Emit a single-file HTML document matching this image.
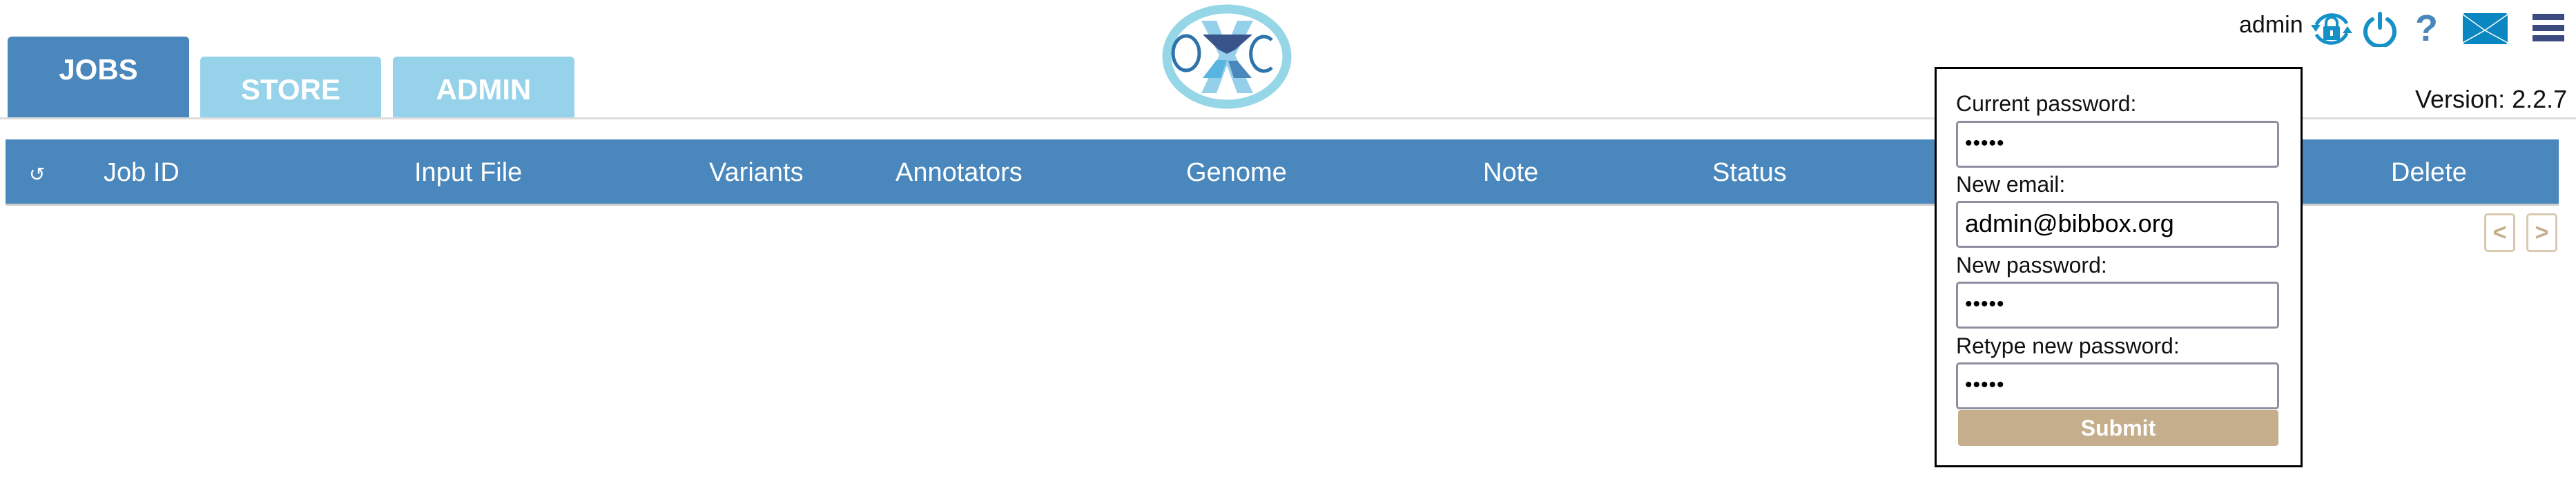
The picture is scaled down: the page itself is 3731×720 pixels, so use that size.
<!DOCTYPE html>
<html><head><meta charset="utf-8"><style>
*{margin:0;padding:0;box-sizing:border-box}
body{width:3731px;height:720px;background:#fff;position:relative;overflow:hidden;font-family:"Liberation Sans Narrow","Liberation Sans",sans-serif}
.a{position:absolute}
.tab{position:absolute;color:#fff;font-size:42px;font-weight:bold;text-align:center;border-radius:6px 6px 0 0}
.th{position:absolute;top:229px;color:#fff;font-size:38px;white-space:nowrap}
.lbl{position:absolute;left:2833px;font-size:32px;color:#111;white-space:nowrap}
.inp{position:absolute;left:2833px;width:468px;height:68px;border:3px solid #8e8ea0;border-radius:5px;font-size:36px;padding-left:10px;line-height:60px;color:#000;font-family:"Liberation Sans",sans-serif}
.dots{font-size:30px;letter-spacing:1px}
.pg{position:absolute;top:309px;width:45px;height:56px;border:3px solid #d9c9b0;border-radius:5px;color:#c5ae8c;font-size:34px;font-weight:bold;text-align:center;line-height:50px}
</style></head><body>
<div class="tab" style="left:11px;top:53px;width:263px;height:120px;background:#4a87bc;line-height:96px">JOBS</div>
<div class="tab" style="left:290px;top:82px;width:262px;height:91px;background:#96d2ea;line-height:96px">STORE</div>
<div class="tab" style="left:569px;top:82px;width:263px;height:91px;background:#96d2ea;line-height:96px">ADMIN</div>
<div class="a" style="left:0;top:170px;width:3731px;height:3px;background:#ddd"></div>

<svg class="a" style="left:1670px;top:0" width="214" height="170" viewBox="1670 0 214 170">
<ellipse cx="1777" cy="82" rx="87" ry="69" fill="#fff" stroke="#95d6e7" stroke-width="13"/>
<path d="M1740 30 L1762 30 L1777 67 L1792 30 L1815 30 L1789 80 L1815 135 L1792 135 L1777 95 L1762 135 L1740 135 L1766 80Z" fill="#95d0ea"/>
<path d="M1742 50 L1814 50 L1789 72 L1777 78 L1765 72Z" fill="#38548a"/>
<path d="M1762 87 L1777 87 L1768 113 L1742 113Z" fill="#5ab4e2"/>
<path d="M1779 88 L1792 88 L1813 113 L1787 113Z" fill="#4a87bc"/>
<ellipse cx="1718" cy="77" rx="19" ry="25" fill="none" stroke="#2e74ab" stroke-width="5"/>
<path d="M1842 58 A19 25 0 1 0 1842 98" fill="none" stroke="#2e74ab" stroke-width="5"/>
</svg>

<div class="a" style="left:3243px;top:17px;font-size:34px;color:#111;font-family:'Liberation Sans',sans-serif">admin</div>
<svg class="a" style="left:3345px;top:14px" width="64" height="56" viewBox="0 0 64 56">
<path d="M10 22 A24 22 0 0 1 54 20" fill="none" stroke="#1591c7" stroke-width="5"/>
<path d="M54 34 A24 22 0 0 1 10 36" fill="none" stroke="#1591c7" stroke-width="5"/>
<path d="M2 22 L16 22 L9 32Z M62 34 L48 34 L55 24Z" fill="#1591c7"/>
<rect x="20" y="24" width="24" height="20" rx="2" fill="#1591c7"/>
<path d="M24 25 V19 a8 8 0 0 1 16 0 V25" fill="none" stroke="#1591c7" stroke-width="4"/>
<rect x="30" y="30" width="4" height="8" fill="#fff"/>
</svg>
<svg class="a" style="left:3422px;top:16px" width="50" height="52" viewBox="0 0 50 52">
<path d="M14 12 A21 21 0 1 0 36 12" fill="none" stroke="#1591c7" stroke-width="6" stroke-linecap="round"/>
<line x1="25" y1="4" x2="25" y2="24" stroke="#1591c7" stroke-width="6" stroke-linecap="round"/>
</svg>
<div class="a" style="left:3498px;top:10px;font-size:54px;font-weight:bold;color:#4a87bc;font-family:'Liberation Sans',sans-serif">?</div>
<svg class="a" style="left:3567px;top:19px" width="65" height="45" viewBox="0 0 65 45">
<rect width="65" height="45" rx="3" fill="#0a87c0"/>
<path d="M0 2 L32 25 L65 2 M0 43 L32 25 L65 43" fill="none" stroke="#fff" stroke-width="1.5"/>
</svg>
<div class="a" style="left:3668px;top:20px;width:46px;height:9px;background:#3d4a80"></div>
<div class="a" style="left:3668px;top:36px;width:46px;height:9px;background:#3d4a80"></div>
<div class="a" style="left:3668px;top:51px;width:46px;height:9px;background:#3d4a80"></div>
<div class="a" style="left:3498px;top:123px;font-size:36px;color:#111;font-family:'Liberation Sans',sans-serif">Version: 2.2.7</div>

<div class="a" style="left:8px;top:202px;width:3698px;height:96px;background:#4a87bc;border-bottom:3px solid #ccc"></div>
<div class="th" style="left:42px;font-size:28px;top:236px">↺</div>
<div class="th" style="left:150px">Job ID</div>
<div class="th" style="left:600px">Input File</div>
<div class="th" style="left:1027px">Variants</div>
<div class="th" style="left:1297px">Annotators</div>
<div class="th" style="left:1718px">Genome</div>
<div class="th" style="left:2148px">Note</div>
<div class="th" style="left:2480px">Status</div>
<div class="th" style="left:3463px">Delete</div>
<div class="pg" style="left:3598px">&lt;</div>
<div class="pg" style="left:3659px">&gt;</div>

<div class="a" style="left:2802px;top:97px;width:533px;height:580px;border:3px solid #000;background:#fff"></div>
<div class="lbl" style="top:132px">Current password:</div>
<div class="inp dots" style="top:175px">•••••</div>
<div class="lbl" style="top:249px">New email:</div>
<div class="inp" style="top:291px">admin@bibbox.org</div>
<div class="lbl" style="top:366px">New password:</div>
<div class="inp dots" style="top:408px">•••••</div>
<div class="lbl" style="top:483px">Retype new password:</div>
<div class="inp dots" style="top:525px">•••••</div>
<div class="a" style="left:2836px;top:594px;width:464px;height:52px;background:#c5ae8c;border-radius:4px;color:#fff;font-weight:bold;font-size:32px;text-align:center;line-height:52px">Submit</div>
</body></html>
